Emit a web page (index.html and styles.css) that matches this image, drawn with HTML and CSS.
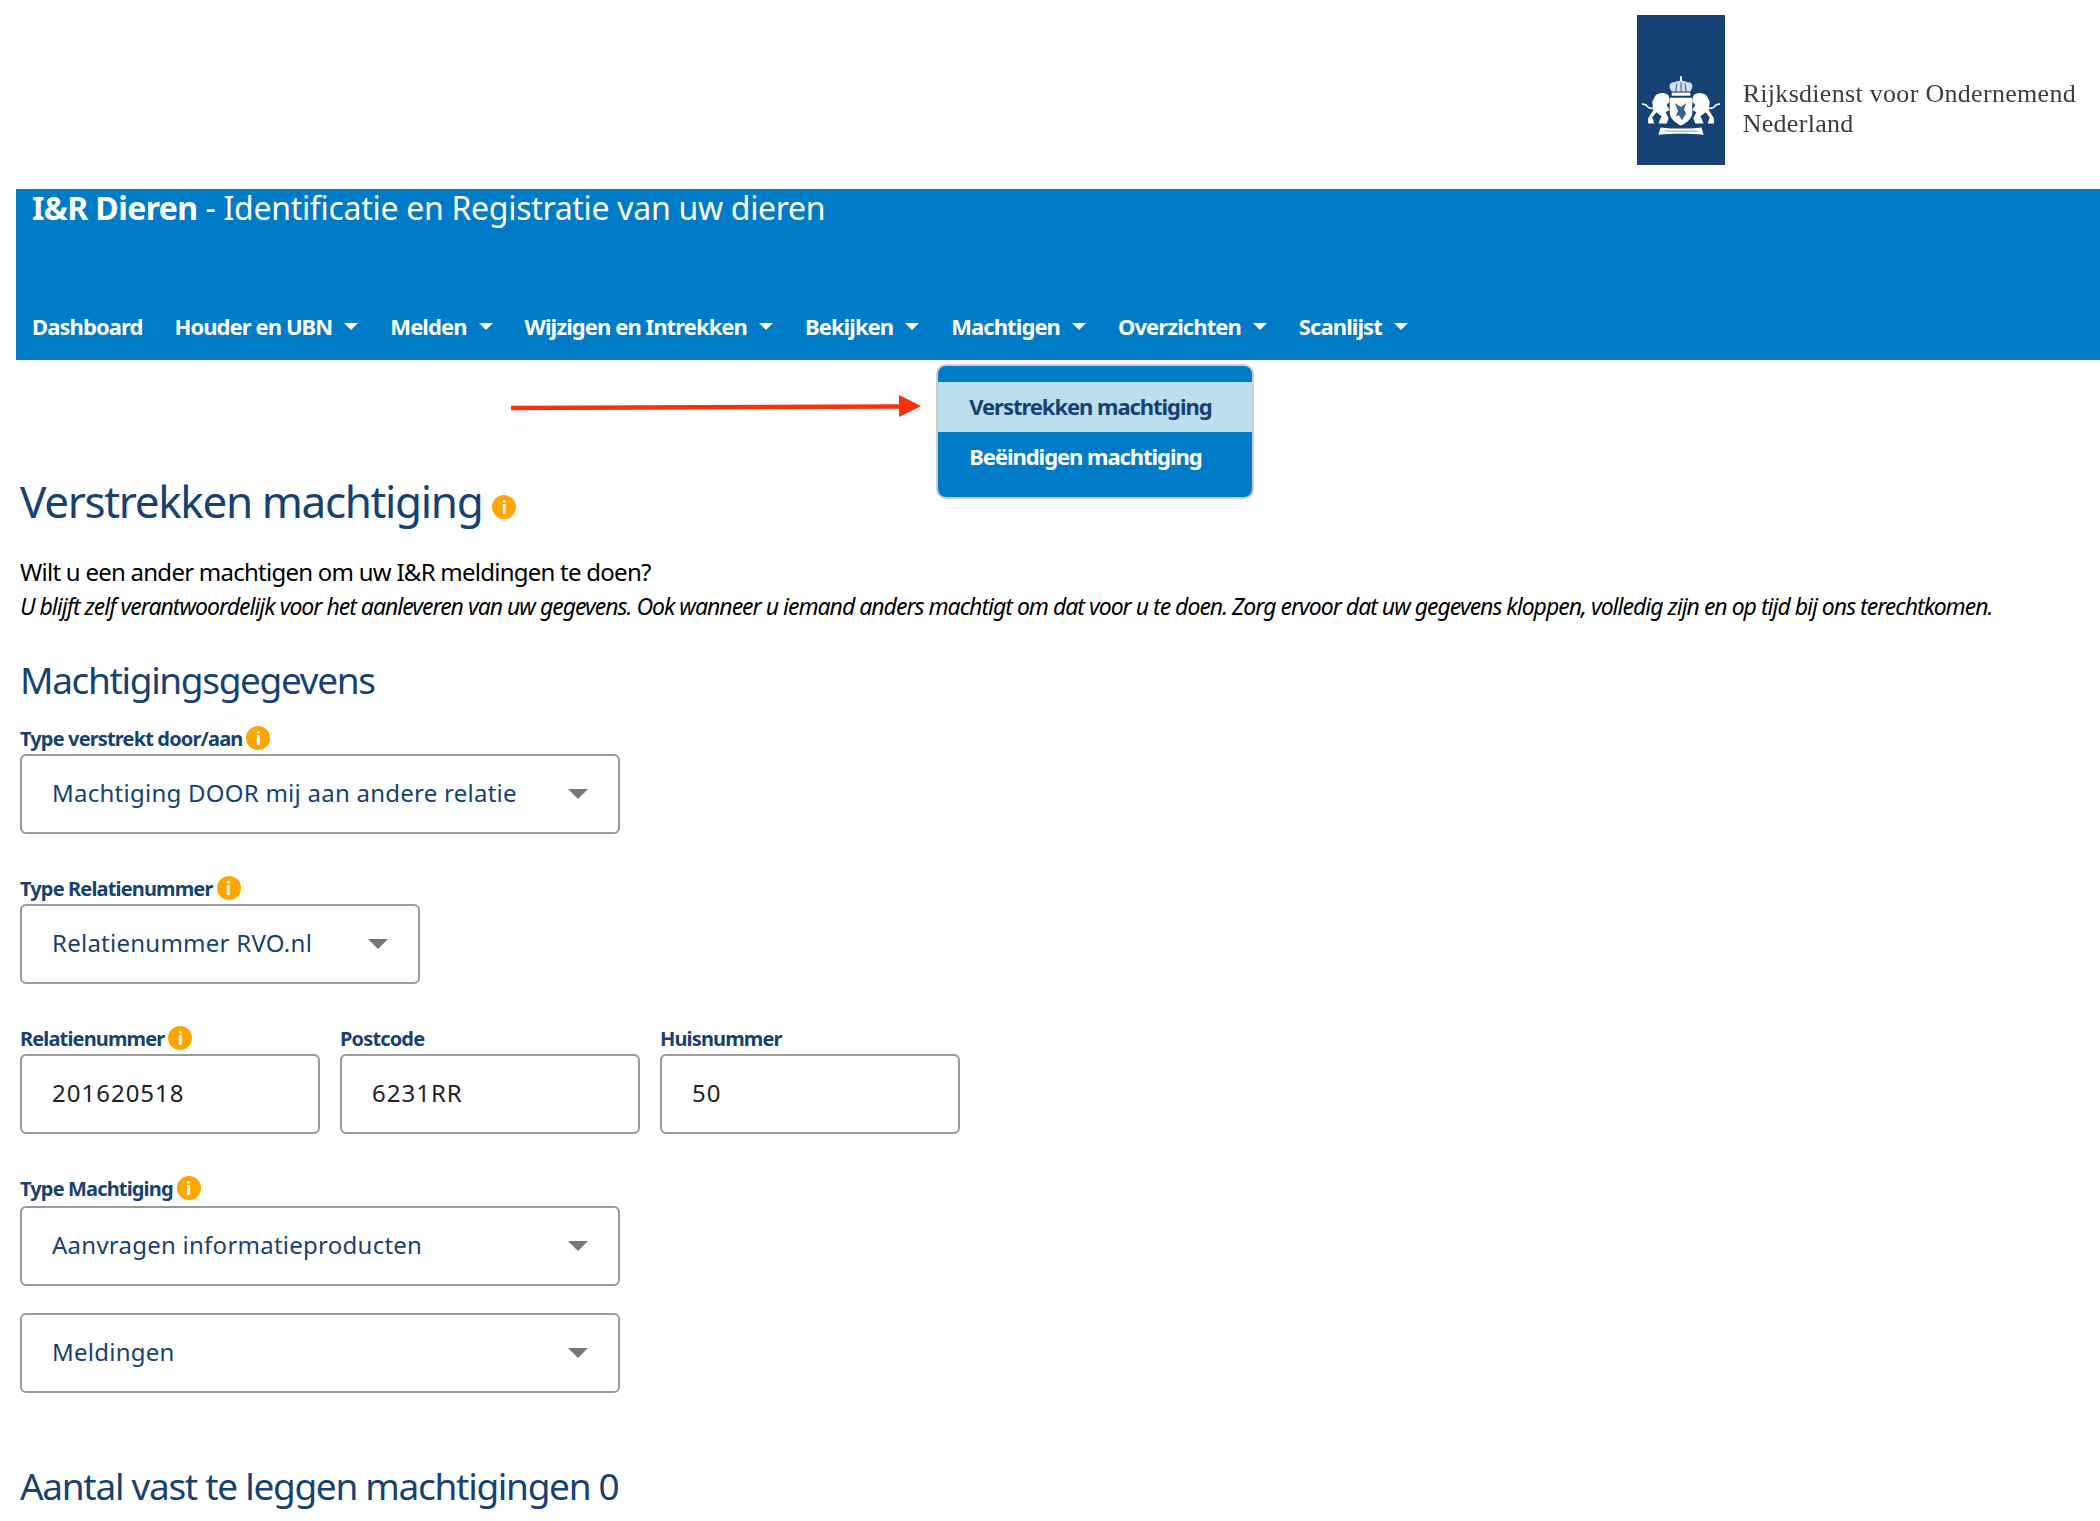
FILE: index.html
```html
<!DOCTYPE html>
<html lang="nl">
<head>
    <meta charset="UTF-8">
    <title>I&amp;R Dieren - Verstrekken machtiging</title>
    <link rel="stylesheet" href="styles.css">
</head>
<body>
    <header class="top">
        <div class="logo">
            <div class="logo-box">
                <svg class="crest" viewBox="0 0 76 60" width="78" height="62">
                    <defs>
                        <g id="lion" fill="#fff">
                            <path d="M13 19c3-3 10-4 13 0l1 6-3 3 3 5-4 2 3 6-2 5h-8l3-7-5-4-4 5 2 6H6v-5l5-8-1-8z"/>
                            <path d="M12 31c-4 1-7-1-8-3l-4-1" fill="none" stroke="#fff" stroke-width="1.6"/>
                        </g>
                    </defs>
                    <use href="#lion"/>
                    <use href="#lion" transform="matrix(-1 0 0 1 76 0)"/>
                    <path d="M38 0v5" stroke="#fff" stroke-width="2"/>
                    <path d="M29 15c-4-5-2-10 3-9 2-2 10-2 12 0 5-1 7 4 3 9z" fill="#d5deea"/>
                    <path d="M34 7l-1 8M42 7l1 8M38 6v9" stroke="#154273" stroke-width=".8"/>
                    <path d="M29 16h18v3H29z" fill="#fff"/>
                    <path d="M27 21h22v14c0 6-5 10-11 13-6-3-11-7-11-13z" fill="#fff"/>
                    <path d="M32 26l6 4 5-4-2 7 2 3-4 7-3-5-3 1 2-5z" fill="#3d6491"/>
                    <path d="M18 50c7 1 13 1 20 1s13 0 20-1l2 7c-7-1-15-1-22-1s-15 0-22 1z" fill="#fff"/>
                    <path d="M22 53.500h32" stroke="#9fb3cb" stroke-width="1"/>
                </svg>
            </div>
            <div class="logo-text">Rijksdienst voor Ondernemend<br>Nederland</div>
        </div>
    </header>

    <div class="bar">
        <div class="app-title"><strong>I&amp;R Dieren</strong> - Identificatie en Registratie van uw dieren</div>
        <nav class="menu">
            <a href="#">Dashboard</a>
            <a href="#" class="caret">Houder en UBN</a>
            <a href="#" class="caret">Melden</a>
            <a href="#" class="caret">Wijzigen en Intrekken</a>
            <a href="#" class="caret">Bekijken</a>
            <div class="menu-item">
                <a href="#" class="caret">Machtigen</a>
                <div class="dropdown">
                    <a href="#" class="active">Verstrekken machtiging</a>
                    <a href="#">Beëindigen machtiging</a>
                </div>
            </div>
            <a href="#" class="caret">Overzichten</a>
            <a href="#" class="caret">Scanlijst</a>
        </nav>
    </div>

    <svg class="pointer" width="410" height="22" viewBox="0 0 410 22">
        <path d="M0 13L392 11.500" stroke="#f9300a" stroke-width="4.500" fill="none"/>
        <path d="M388 0l22 11-22 11z" fill="#f9300a"/>
    </svg>

    <main>
        <h1>Verstrekken machtiging <span class="info small">i</span></h1>
        <p class="intro">Wilt u een ander machtigen om uw I&amp;R meldingen te doen?</p>
        <p class="note">U blijft zelf verantwoordelijk voor het aanleveren van uw gegevens. Ook wanneer u iemand anders machtigt om dat voor u te doen. Zorg ervoor dat uw gegevens kloppen, volledig zijn en op tijd bij ons terechtkomen.</p>

        <h2>Machtigingsgegevens</h2>

        <form>
            <div class="field">
                <label>Type verstrekt door/aan <span class="info">i</span></label>
                <div class="select wide"><select><option>Machtiging DOOR mij aan andere relatie</option></select></div>
            </div>
            <div class="field">
                <label>Type Relatienummer <span class="info">i</span></label>
                <div class="select narrow"><select><option>Relatienummer RVO.nl</option></select></div>
            </div>
            <div class="field-row">
                <div class="field">
                    <label>Relatienummer <span class="info">i</span></label>
                    <input type="text" value="201620518">
                </div>
                <div class="field">
                    <label>Postcode</label>
                    <input type="text" value="6231RR">
                </div>
                <div class="field">
                    <label>Huisnummer</label>
                    <input type="text" value="50">
                </div>
            </div>
            <div class="field tight">
                <label>Type Machtiging <span class="info">i</span></label>
                <div class="select wide"><select><option>Aanvragen informatieproducten</option></select></div>
            </div>
            <div class="select wide"><select><option>Meldingen</option></select></div>
        </form>

        <h2 class="count">Aantal vast te leggen machtigingen 0</h2>
    </main>
</body>
</html>
```

FILE: styles.css
```css
* {
    box-sizing: border-box;
}

html, body {
    height: 1521px;
    overflow: hidden;
}

body {
    position: relative;
    margin: 0;
    font-family: "Noto Sans", sans-serif;
    background-color: #fff;
    color: #000;
}

.top {
    height: 189px;
    padding: 15px 24px 0 0;
    display: flex;
    justify-content: flex-end;
}

.logo {
    display: flex;
    align-items: flex-start;
    filter: blur(0.5px);
}

.logo-box {
    width: 88px;
    height: 150px;
    background-color: #154273;
    padding-top: 61px;
    display: flex;
    justify-content: center;
}

.crest {
    display: block;
}

.logo-text {
    margin: 64px 0 0 18px;
    font-family: "Liberation Serif", serif;
    font-size: 26px;
    line-height: 30px;
    letter-spacing: 0.3px;
    color: #3c3c3c;
}

.bar {
    margin-left: 16px;
    height: 171px;
    background-color: #007bc7;
    color: #fff;
    padding: 0 16px;
    display: flex;
    flex-direction: column;
    justify-content: space-between;
}

.app-title {
    font-size: 32px;
    line-height: 38px;
    letter-spacing: -0.3px;
}

.app-title strong {
    letter-spacing: -0.6px;
}

.menu {
    display: flex;
    gap: 32px;
    height: 54px;
    font-size: 22px;
    font-weight: 700;
    letter-spacing: -0.92px;
}

.menu a {
    color: #fff;
    text-decoration: none;
}

.menu > a, .menu-item > a {
    display: block;
    line-height: 40px;
}

.caret::after {
    content: "";
    display: inline-block;
    margin-left: 12px;
    vertical-align: 5px;
    border-top: 7px solid #fff;
    border-left: 7px solid transparent;
    border-right: 7px solid transparent;
}

.menu-item {
    position: relative;
}

.dropdown {
    position: absolute;
    top: 58px;
    left: -15px;
    width: 318px;
    height: 135px;
    padding-top: 16px;
    background-color: #007bc7;
    border: 2px solid #ccc;
    border-radius: 10px;
    letter-spacing: -1.05px;
}

.dropdown a {
    display: block;
    height: 50px;
    line-height: 48px;
    padding-left: 31px;
}

.dropdown a.active {
    background-color: #bcdeee;
    color: #154273;
}

.pointer {
    position: absolute;
    left: 511px;
    top: 395px;
}

main {
    padding: 0 20px;
    color: #154273;
}

h1 {
    margin: 0;
    padding-top: 111px;
    font-size: 44px;
    line-height: 60px;
    font-weight: 400;
    letter-spacing: -1.35px;
}

h2 {
    margin: 0;
    font-size: 37px;
    line-height: 50px;
    font-weight: 400;
    letter-spacing: -1.35px;
}

.intro {
    margin: 24px 0 0;
    font-size: 24px;
    line-height: 34px;
    color: #000;
    letter-spacing: -0.75px;
}

.note {
    margin: 0;
    font-size: 23px;
    line-height: 34px;
    font-style: italic;
    color: #000;
    letter-spacing: -1px;
    white-space: nowrap;
}

main > h2 {
    margin-top: 32px;
}

form {
    margin-top: 19px;
}

.field {
    margin-bottom: 40px;
}

.field.tight {
    margin-bottom: 27px;
}

label {
    display: flex;
    align-items: flex-start;
    gap: 4px;
    height: 30px;
    font-size: 20px;
    line-height: 29px;
    font-weight: 700;
    letter-spacing: -0.85px;
    white-space: nowrap;
}

.tight label {
    height: 32px;
}

label .info {
    margin-top: 2px;
}

.info {
    display: inline-block;
    width: 24px;
    height: 24px;
    border-radius: 50%;
    background-color: #ffa500;
    color: #fff;
    font-size: 18px;
    line-height: 24px;
    font-weight: 700;
    text-align: center;
    letter-spacing: 0;
}

.info.small {
    vertical-align: 4px;
}

.select {
    position: relative;
    height: 80px;
}

.select.wide {
    width: 600px;
}

.select.narrow {
    width: 400px;
}

.select::after {
    content: "";
    position: absolute;
    right: 32px;
    top: 35px;
    border-top: 10px solid #777;
    border-left: 10px solid transparent;
    border-right: 10px solid transparent;
    pointer-events: none;
}

select, input {
    width: 100%;
    height: 80px;
    padding: 0 30px 3px;
    border: 2px solid #999;
    border-radius: 6px;
    background-color: #fff;
    font-family: "Noto Sans", sans-serif;
    font-size: 24px;
    letter-spacing: 0.25px;
    appearance: none;
    color: #154273;
}

input {
    color: #222;
    letter-spacing: 1px;
}

.field-row {
    display: flex;
    gap: 20px;
}

.field-row .field {
    width: 300px;
}

.count {
    margin-top: 68px;
    letter-spacing: -1.3px;
}
```
